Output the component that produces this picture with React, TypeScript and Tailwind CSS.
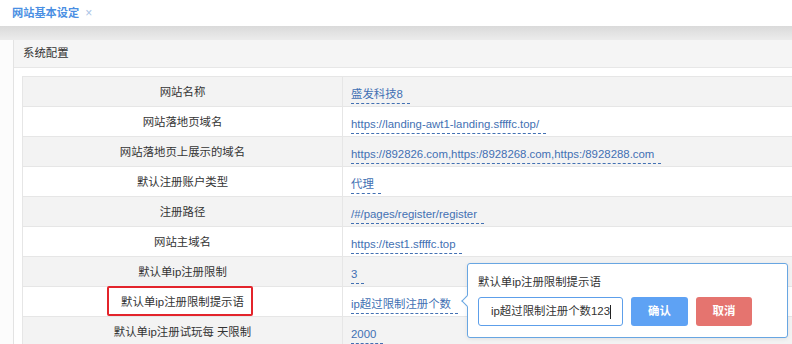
const rows = [
    { label: "网站名称", value: "盛发科技8" },
    { label: "网站落地页域名", value: "https://landing-awt1-landing.sffffc.top/" },
    { label: "网站落地页上展示的域名", value: "https://892826.com,https:/8928268.com,https:/8928288.com" },
    { label: "默认注册账户类型", value: "代理" },
    { label: "注册路径", value: "/#/pages/register/register" },
    { label: "网站主域名", value: "https://test1.sffffc.top" },
    { label: "默认单ip注册限制", value: "3" },
    { label: "默认单ip注册限制提示语", value: "ip超过限制注册个数", marked: true },
    { label: "默认单ip注册试玩每 天限制", value: "2000" },
]

export default function App() {
    return (
        <div className="relative w-[792px] h-[344px] overflow-hidden bg-white text-[11.4px] text-[#333] font-['Liberation_Sans','Noto_Sans_CJK_SC',sans-serif]">
            {/* tab bar */}
            <div className="h-[26px] flex items-center pl-[12px] gap-[6px]">
                <span className="text-[#4a8fe3] font-semibold text-[11.2px]">网站基本设定</span>
                <span className="text-[#a9c3e6] text-[12px]">×</span>
            </div>
            <div className="h-[14px] bg-gradient-to-b from-[#dadada] to-[#ececec]" />

            <div className="flex">
                <div className="w-[14px] h-[310px] bg-[#fcfcfc] border-r border-[#e3e3e3]" />

                <div className="flex-1">
                    {/* panel header */}
                    <div className="h-[28px] bg-[#f5f5f5] border-b border-[#e7e7e7] flex items-center pl-[9px]">
                        系统配置
                    </div>

                    <div className="pt-[8px] pl-[8px]">
                        <div className="border-t border-l border-[#e6e6e6]">
                            {rows.map((row, i) => (
                                <div key={i} className={`grid grid-cols-[320px_1fr] h-[30px] border-b border-[#e6e6e6] ${i % 2 === 0 ? "bg-[#f3f3f3]" : "bg-white"}`}>
                                    <div className="relative flex items-center justify-center pt-[2px] border-r border-[#e6e6e6]">
                                        {row.label}
                                        {row.marked &&
                                            <div className="absolute top-[-1px] left-[84px] w-[146px] h-[30px] border-2 border-[#e3242b] rounded-[2px]" />
                                        }
                                    </div>
                                    <div className="pl-[8px] pt-[8px]">
                                        <span className="inline-block leading-[18px] pr-[7px] text-[#4270b3] border-b border-dashed border-[#4270b3]">
                                            {row.value}
                                        </span>
                                    </div>
                                </div>
                            ))}
                        </div>
                    </div>
                </div>
            </div>

            {/* edit popover */}
            <div className="absolute left-[467px] top-[263px] w-[321px] h-[75px] bg-white border border-[#68a6e2] rounded-[3px] shadow-[0_1px_4px_rgba(0,0,0,0.08)] px-[10px] pt-[9px]">
                <div className="absolute left-[-5px] top-[33px] w-[8px] h-[8px] bg-white border-l border-b border-[#68a6e2] rotate-45" />
                <div className="leading-[18px]">默认单ip注册限制提示语</div>
                <div className="flex gap-[8px] mt-[6px]">
                    <div className="w-[145px] h-[29px] border border-[#5d9fea] rounded-[3px] flex items-center pl-[12px]">
                        ip超过限制注册个数123
                        <span className="inline-block w-[1px] h-[14px] bg-[#222]" />
                    </div>
                    <button className="w-[57px] h-[29px] rounded-[3px] bg-[#5ea2f4] text-white font-bold">
                        确认
                    </button>
                    <button className="w-[56px] h-[29px] rounded-[3px] bg-[#e5746f] text-white font-bold">
                        取消
                    </button>
                </div>
            </div>
        </div>
    )
}
